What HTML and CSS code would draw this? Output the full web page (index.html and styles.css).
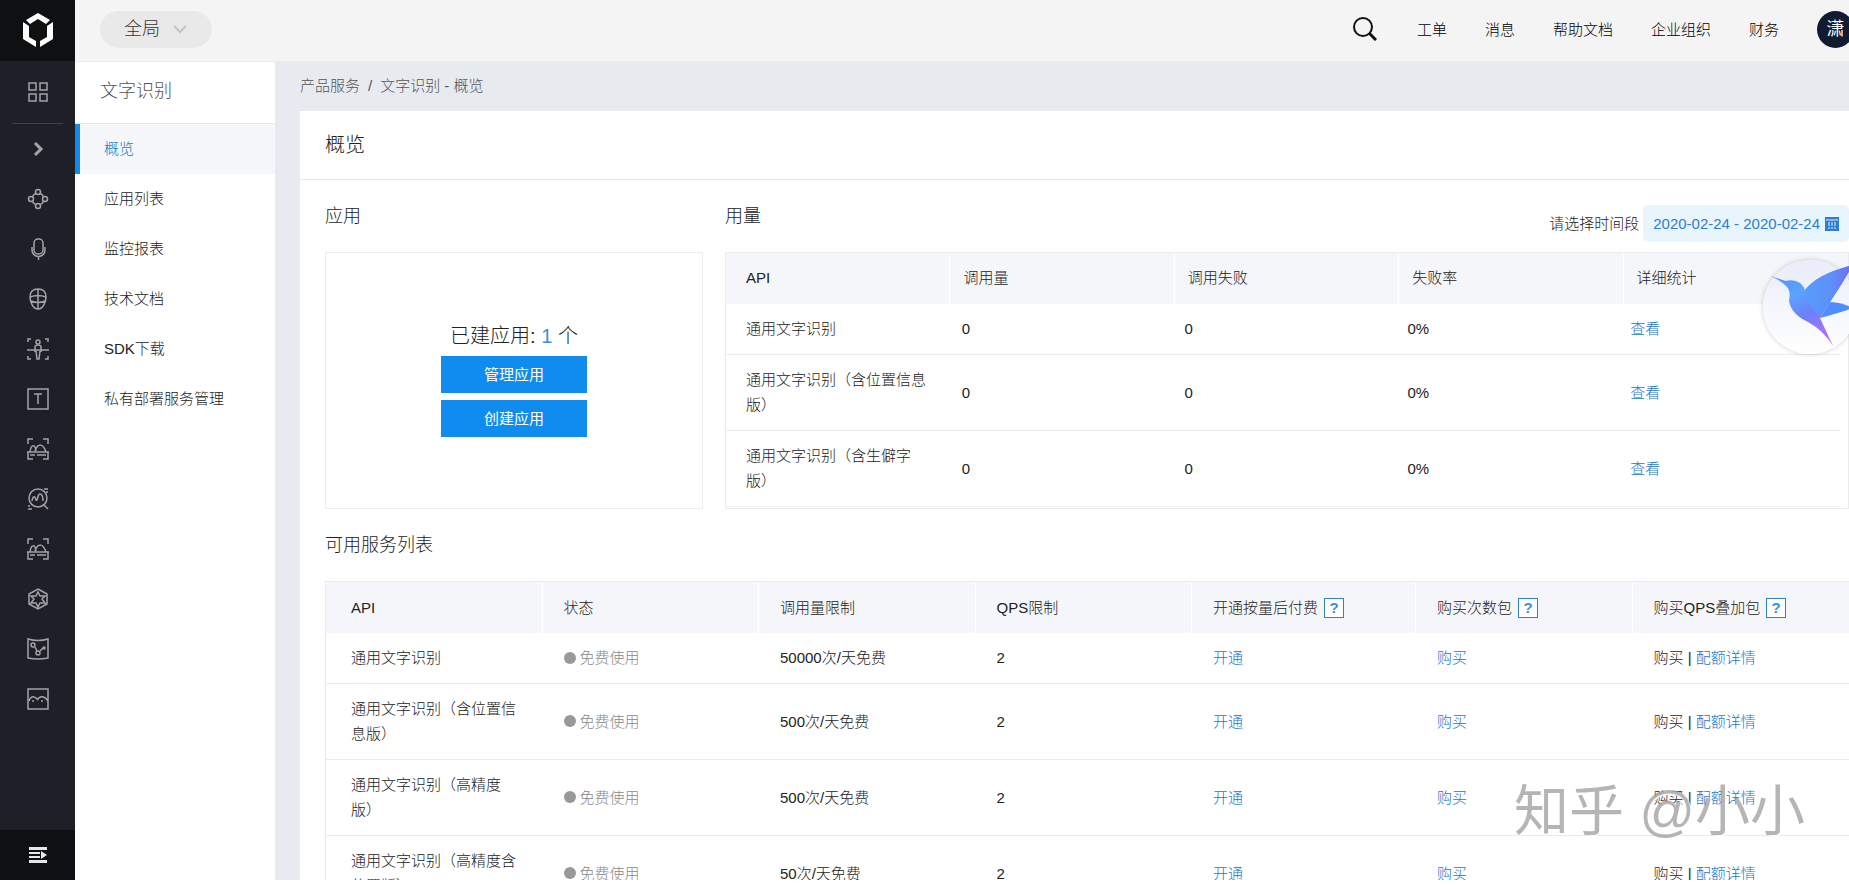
FILE: index.html
```html
<!DOCTYPE html>
<html lang="zh-CN">
<head>
    <meta charset="UTF-8">
    <meta name="viewport" content="width=device-width, initial-scale=1.0">
    <title>文字识别 - 概览</title>
    <link rel="stylesheet" href="styles.css">
</head>
<body>
    <div class="layout">
        <nav class="rail" aria-label="产品导航">
            <a class="rail-logo" href="#" aria-label="首页">
                <svg width="30" height="34" viewBox="0 0 30 34" fill="#fff">
                    <path d="M15 0L27 7L23 11L15 6L7 11L3 7Z"/>
                    <path d="M0 9L6 13V24L13 28V34L0 26Z"/>
                    <path d="M30 9L24 13V24L17 28V34L30 26Z"/>
                </svg>
            </a>
            <a class="rail-item rail-home" href="#" aria-label="产品总览">
                <svg viewBox="0 0 22 22"><path d="M2 2h7v7H2zM13 2h7v7h-7zM2 13h7v7H2zM13 13h7v7h-7z"/></svg>
            </a>
            <div class="rail-list">
                <a class="rail-item" href="#" aria-label="展开">
                    <svg viewBox="0 0 22 22"><path class="thick" d="M8 5l6 6-6 6"/></svg>
                </a>
                <a class="rail-item" href="#" aria-label="应用">
                    <svg viewBox="0 0 22 22"><circle cx="11" cy="11" r="6"/><circle class="node" cx="11" cy="4" r="2.5"/><circle class="node" cx="11" cy="18" r="2.5"/><circle class="node" cx="4" cy="11" r="2.5"/><circle class="node" cx="18" cy="11" r="2.5"/></svg>
                </a>
                <a class="rail-item" href="#" aria-label="语音">
                    <svg viewBox="0 0 22 22"><rect x="7" y="1" width="9" height="15" rx="4"/><path d="M5 9v3a6.500 6.500 0 0 0 13 0V9M11.500 18v4"/></svg>
                </a>
                <a class="rail-item" href="#" aria-label="人脸">
                    <svg viewBox="0 0 22 22"><path d="M11 1c5 0 8 3 8 8s-3 12-8 12-8-7-8-12 3-8 8-8zM11 1v20M3 9q8-3 16 0M4 13q7 3 14 0"/></svg>
                </a>
                <a class="rail-item" href="#" aria-label="人体">
                    <svg viewBox="0 0 22 22"><path d="M1 4V1h3M18 1h3v3M1 18v3h3M18 21h3v-3M0 12h22M9 13l1 8h2l1-8M8 14V9q0-2 3-2t3 2v5"/><circle cx="11" cy="4" r="2"/></svg>
                </a>
                <a class="rail-item" href="#" aria-label="文字">
                    <svg viewBox="0 0 22 22"><path d="M1 1h20v20H1zM7 6h8M11 6v10"/></svg>
                </a>
                <a class="rail-item" href="#" aria-label="图像">
                    <svg viewBox="0 0 22 22"><path d="M1 6V1h5M16 1h5v5M1 14v7h5M16 21h5v-7M0 14h22M3 17h5M10 17h9M3 14C4 6 8 6 9 13M8 13c3-8 8-8 11 1"/></svg>
                </a>
                <a class="rail-item" href="#" aria-label="图像搜索">
                    <svg viewBox="0 0 22 22"><circle cx="11" cy="10" r="9"/><path d="M5 13c1-6 3-5 4-1 2 2 1-6 4-6 2 0 3 3 3 7M17 17l4 4M17 1h4M19 4h2M1 18h2M1 21h4"/></svg>
                </a>
                <a class="rail-item" href="#" aria-label="图像审核">
                    <svg viewBox="0 0 22 22"><path d="M1 6V1h5M16 1h5v5M1 14v7h5M16 21h5v-7M0 14h22M3 17h5M10 17h9M3 14C4 6 8 6 9 13M8 13c3-8 8-8 11 1"/></svg>
                </a>
                <a class="rail-item" href="#" aria-label="增强现实">
                    <svg viewBox="0 0 22 22"><path d="M11 1l9 5v10l-9 5-9-5V6zM11 4l2 4h5l-3 3 3 4h-5l-2 4-2-4H4l3-4-3-3h5z"/></svg>
                </a>
                <a class="rail-item" href="#" aria-label="知识图谱">
                    <svg viewBox="0 0 22 22"><path d="M1 1q10 3 20 0v19q-10 2-20 0zM8 9l2 4M13 13l3-3"/><circle cx="6" cy="7" r="2"/><circle cx="11" cy="15" r="2"/><circle cx="17" cy="10" r="1"/></svg>
                </a>
                <a class="rail-item" href="#" aria-label="视频">
                    <svg viewBox="0 0 22 22"><path d="M1 1h20v20H1zM2 13c2-6 6-5 9-1M10 12c3-5 8-4 11 1M5 13h2M14 13h2"/></svg>
                </a>
            </div>
            <button class="rail-toggle" type="button" aria-label="展开菜单">
                <svg width="18" height="16" viewBox="0 0 18 16" fill="#e3e8e8"><path d="M0 0h18v3H0zM0 5h11v2H0zM0 9h11v2H0zM0 13h18v3H0zM12 4l6 4-6 4z"/></svg>
            </button>
        </nav>

        <div class="page">
            <header class="topbar">
                <button class="region" type="button">全局
                    <svg width="16" height="10" viewBox="0 0 16 10"><path d="M2 2l6 6 6-6" fill="none" stroke="#c4c4c4" stroke-width="2"/></svg>
                </button>
                <div class="topnav">
                    <button class="search" type="button" aria-label="搜索">
                        <svg width="24" height="24" viewBox="0 0 24 24" fill="none" stroke="#111" stroke-width="3"><circle cx="10" cy="10" r="9" stroke-width="2"/><path d="M16 16l7 7"/></svg>
                    </button>
                    <a href="#">工单</a>
                    <a href="#">消息</a>
                    <a href="#">帮助文档</a>
                    <a href="#">企业组织</a>
                    <a href="#">财务</a>
                    <a class="avatar" href="#">潇</a>
                </div>
            </header>

            <div class="body">
                <aside class="sidebar">
                    <h2>文字识别</h2>
                    <a class="active" href="#">概览</a>
                    <a href="#">应用列表</a>
                    <a href="#">监控报表</a>
                    <a href="#">技术文档</a>
                    <a href="#">SDK下载</a>
                    <a href="#">私有部署服务管理</a>
                </aside>

                <main class="main">
                    <div class="breadcrumb"><a href="#">产品服务</a><span class="slash">/</span><span>文字识别 - 概览</span></div>
                    <div class="card">
                        <h1>概览</h1>
                        <div class="panels">
                            <section class="apps">
                                <div class="section-head"><h3>应用</h3></div>
                                <div class="apps-box">
                                    <p>已建应用: <b>1</b> 个</p>
                                    <button type="button">管理应用</button>
                                    <button type="button">创建应用</button>
                                </div>
                            </section>
                            <section class="usage">
                                <div class="section-head">
                                    <h3>用量</h3>
                                    <div class="range">
                                        <label for="range">请选择时间段</label>
                                        <button class="range-btn" id="range" type="button">2020-02-24 - 2020-02-24
                                            <svg width="14" height="14" viewBox="0 0 14 14"><path d="M0 0h14v14H0z" fill="#2d7dd2"/><path d="M1 3h12M3 6h2M6 6h2M9 6h2M3 8h2M6 8h2M9 8h2M3 11h2M6 11h2M9 11h2" stroke="#e8f5fd"/></svg>
                                        </button>
                                    </div>
                                </div>
                                <div class="usage-box">
                                    <table class="usage-table">
                                        <thead>
                                            <tr>
                                                <th>API</th>
                                                <th>调用量</th>
                                                <th>调用失败</th>
                                                <th>失败率</th>
                                                <th>详细统计</th>
                                            </tr>
                                        </thead>
                                    </table>
                                    <div class="usage-scroll">
                                        <table class="usage-table">
                                            <tbody>
                                                <tr>
                                                    <td>通用文字识别</td>
                                                    <td>0</td>
                                                    <td>0</td>
                                                    <td>0%</td>
                                                    <td><a href="#">查看</a></td>
                                                </tr>
                                                <tr>
                                                    <td>通用文字识别（含位置信息版）</td>
                                                    <td>0</td>
                                                    <td>0</td>
                                                    <td>0%</td>
                                                    <td><a href="#">查看</a></td>
                                                </tr>
                                                <tr>
                                                    <td>通用文字识别（含生僻字版）</td>
                                                    <td>0</td>
                                                    <td>0</td>
                                                    <td>0%</td>
                                                    <td><a href="#">查看</a></td>
                                                </tr>
                                            </tbody>
                                        </table>
                                    </div>
                                </div>
                            </section>
                        </div>

                        <section class="services">
                            <h3>可用服务列表</h3>
                            <table class="service-table">
                                <thead>
                                    <tr>
                                        <th>API</th>
                                        <th>状态</th>
                                        <th>调用量限制</th>
                                        <th>QPS限制</th>
                                        <th class="wide">开通按量后付费<button class="help" type="button">?</button></th>
                                        <th>购买次数包<button class="help" type="button">?</button></th>
                                        <th>购买QPS叠加包<button class="help" type="button">?</button></th>
                                    </tr>
                                </thead>
                                <tbody>
                                    <tr>
                                        <td>通用文字识别</td>
                                        <td><span class="status">免费使用</span></td>
                                        <td>50000次/天免费</td>
                                        <td>2</td>
                                        <td><a href="#">开通</a></td>
                                        <td><a href="#">购买</a></td>
                                        <td>购买 | <a href="#">配额详情</a></td>
                                    </tr>
                                    <tr>
                                        <td>通用文字识别（含位置信息版）</td>
                                        <td><span class="status">免费使用</span></td>
                                        <td>500次/天免费</td>
                                        <td>2</td>
                                        <td><a href="#">开通</a></td>
                                        <td><a href="#">购买</a></td>
                                        <td>购买 | <a href="#">配额详情</a></td>
                                    </tr>
                                    <tr>
                                        <td>通用文字识别（高精度版）</td>
                                        <td><span class="status">免费使用</span></td>
                                        <td>500次/天免费</td>
                                        <td>2</td>
                                        <td><a href="#">开通</a></td>
                                        <td><a href="#">购买</a></td>
                                        <td>购买 | <a href="#">配额详情</a></td>
                                    </tr>
                                    <tr>
                                        <td>通用文字识别（高精度含位置版）</td>
                                        <td><span class="status">免费使用</span></td>
                                        <td>50次/天免费</td>
                                        <td>2</td>
                                        <td><a href="#">开通</a></td>
                                        <td><a href="#">购买</a></td>
                                        <td>购买 | <a href="#">配额详情</a></td>
                                    </tr>
                                </tbody>
                            </table>
                        </section>
                    </div>
                </main>
            </div>
        </div>
    </div>

    <a class="bird" href="#" aria-label="助手">
        <svg width="94" height="94" viewBox="0 0 94 94">
            <defs>
                <linearGradient id="wing" x1="0" y1="0" x2="1" y2="0">
                    <stop offset="0" stop-color="#559df9"/>
                    <stop offset="0.6" stop-color="#5f8dfb"/>
                    <stop offset="1" stop-color="#7b63e8"/>
                </linearGradient>
                <linearGradient id="torso" x1="0" y1="0" x2="0.6" y2="1">
                    <stop offset="0" stop-color="#4a90f0"/>
                    <stop offset="0.4" stop-color="#5ba3ff"/>
                    <stop offset="0.65" stop-color="#6d7ffb"/>
                    <stop offset="1" stop-color="#c06bf2"/>
                </linearGradient>
            </defs>
            <path d="M67 42Q78 42 90 48Q76 53 57 58Z" fill="#4d8dff"/>
            <path d="M7 16L23 21Q31 19 37 23Q41 26 42 30Q54 14 90 5L78 25L67 42L57 58L70 86Q60 70 45 62Q28 54 26 41Q28 31 24 27Q19 21 7 16Z" fill="url(#torso)"/>
            <path d="M42 30Q54 14 90 5L78 25L67 42L57 56Q44 46 42 30Z" fill="url(#wing)"/>
        </svg>
    </a>
    <div class="watermark">知乎 @小小</div>
</body>
</html>
```
FILE: styles.css
```css
* {
    box-sizing: border-box;
}

body {
    margin: 0;
    overflow: hidden;
    font-family: "Liberation Sans", "Noto Sans CJK SC", sans-serif;
    font-size: 15px;
    font-weight: 300;
    line-height: 25px;
    color: #222;
    background-color: #fff;
}

h1, h2, h3, p {
    margin: 0;
    font-weight: 300;
}

a {
    color: #1677c8;
    text-decoration: none;
}

button {
    font: inherit;
    border: none;
    padding: 0;
    cursor: pointer;
}

.layout {
    display: flex;
    height: calc(100vh - 5px);
    background-color: #e7eaef;
}

/* dark icon rail */
.rail {
    flex: 0 0 75px;
    display: flex;
    flex-direction: column;
    background-color: #1f1f28;
}

.rail-logo {
    flex: 0 0 61px;
    display: flex;
    align-items: center;
    justify-content: center;
    padding-bottom: 2px;
    background-color: #0f1012;
}

.rail-item {
    flex: 0 0 50px;
    display: flex;
    align-items: center;
    justify-content: center;
}

.rail-home {
    flex-basis: 62px;
}

.rail-item svg {
    width: 22px;
    height: 22px;
    fill: none;
    stroke: #a3a3a8;
    stroke-width: 1.5;
}

.rail-item .thick {
    stroke-width: 3;
}

.rail-item .node {
    fill: #1f1f28;
}

.rail-list {
    flex: 1;
    display: flex;
    flex-direction: column;
    overflow: hidden;
}

.rail-list::before {
    content: "";
    flex: 0 0 1px;
    margin: 0 12px;
    background-color: #41414b;
}

.rail-toggle {
    flex: 0 0 50px;
    display: flex;
    align-items: center;
    justify-content: center;
    background-color: #0f1012;
}

.page {
    flex: 1;
    min-width: 0;
    display: flex;
    flex-direction: column;
}

/* top bar */
.topbar {
    flex: 0 0 61px;
    display: flex;
    align-items: center;
    justify-content: space-between;
    padding: 0 0 3px 25px;
    background-color: #f4f4f4;
}

.region {
    display: flex;
    align-items: center;
    gap: 12px;
    height: 37px;
    padding: 0 24px;
    border-radius: 20px;
    font-size: 18px;
    color: #333;
    background-color: #e9e9e9;
}

.topnav {
    display: flex;
    align-items: center;
    gap: 38px;
    margin-right: -5px;
}

.topnav a {
    color: #000;
}

.search {
    display: flex;
    margin-right: 2px;
    background: none;
}

.topnav .avatar {
    width: 37px;
    height: 37px;
    border-radius: 50%;
    line-height: 37px;
    text-align: center;
    font-size: 18px;
    font-weight: 400;
    color: #fff;
    background-color: #101a30;
}

.body {
    flex: 1;
    min-height: 0;
    display: flex;
}

/* second level menu */
.sidebar {
    flex: 0 0 200px;
    border-top: 1px solid #ebedf0;
    background-color: #fff;
}

.sidebar h2 {
    height: 62px;
    padding-left: 25px;
    border-bottom: 1px solid #e6e8ec;
    font-size: 18px;
    line-height: 58px;
    color: #555;
}

.sidebar a {
    display: block;
    padding-left: 29px;
    line-height: 50px;
    color: #222;
}

.sidebar .active {
    padding-left: 24px;
    border-left: 5px solid #108cee;
    color: #1677c8;
    background-color: #f5f7fa;
}

.main {
    flex: 1;
    min-width: 0;
    padding: 12px 0 0 25px;
    overflow: hidden;
}

.breadcrumb {
    margin-bottom: 13px;
    color: #555;
}

.breadcrumb a {
    color: #555;
}

.slash {
    margin: 0 8px;
}

.card {
    padding-left: 25px;
    background-color: #fff;
}

.card h1 {
    height: 69px;
    margin-left: -25px;
    padding-left: 25px;
    border-bottom: 1px solid #e8e9eb;
    font-size: 20px;
    line-height: 68px;
}

.card h3 {
    font-size: 18px;
    line-height: 26px;
}

.panels {
    display: flex;
    gap: 22px;
}

.section-head {
    display: flex;
    justify-content: space-between;
    align-items: flex-start;
    height: 72px;
    padding-top: 23px;
}

.apps {
    flex: 0 0 378px;
}

.apps-box {
    display: flex;
    flex-direction: column;
    align-items: center;
    justify-content: center;
    gap: 7px;
    height: 257px;
    border: 1px solid #ececee;
}

.apps-box p {
    font-size: 20px;
}

.apps-box b {
    font-weight: 300;
    color: #3a8ee0;
}

.apps-box button {
    width: 146px;
    height: 37px;
    font-weight: 400;
    color: #fff;
    background-color: #108cee;
}

.usage {
    flex: 1;
    min-width: 0;
}

.range {
    display: flex;
    align-items: center;
    gap: 4px;
    margin-top: 2px;
}

.range-btn {
    display: flex;
    align-items: center;
    gap: 5px;
    height: 37px;
    padding: 0 10px;
    border-radius: 5px;
    color: #2d7dd2;
    background-color: #e8f5fd;
}

.usage-box {
    height: 257px;
    border: 1px solid #ececee;
}

.usage-scroll {
    height: 204px;
    padding-right: 8px;
    overflow: hidden;
}

/* tables */
table {
    width: 100%;
    table-layout: fixed;
    border-collapse: separate;
    border-spacing: 0;
}

th {
    font-weight: 300;
    text-align: left;
    background-color: #f5f6fa;
    border-right: 1px solid #fff;
}

th:last-child {
    border-right: none;
}

td {
    border-bottom: 1px solid #ebebed;
}

.usage-table th, .usage-table td {
    padding: 12px 13px;
}

.usage-table th {
    padding-bottom: 14px;
}

.usage-table td {
    padding-bottom: 13px;
}

.usage-table th:first-child, .usage-table td:first-child {
    padding-left: 20px;
    padding-right: 20px;
}

.services h3 {
    padding: 23px 0;
    line-height: 26px;
}

.service-table {
    border-top: 1px solid #ebebed;
    border-left: 1px solid #ebebed;
}

.service-table th, .service-table td {
    padding: 13px 21px;
}

.service-table td {
    padding: 12px 21px 13px;
}

.service-table th:first-child, .service-table td:first-child {
    padding-left: 25px;
}

.service-table th:last-child, .service-table td:last-child {
    padding-right: 0;
}

.wide {
    width: 224px;
}

.help {
    width: 20px;
    height: 20px;
    margin-left: 6px;
    border: 1px solid #2b85b8;
    line-height: 18px;
    font-weight: 700;
    color: #3a8ee0;
    background-color: #fff;
}

.status {
    display: flex;
    align-items: center;
    gap: 4px;
    color: #888;
}

.status::before {
    content: "";
    width: 12px;
    height: 12px;
    border-radius: 50%;
    background-color: #999;
}

/* floating assistant */
.bird {
    position: fixed;
    top: 260px;
    right: -8px;
    width: 94px;
    height: 94px;
    border-radius: 50%;
    background: linear-gradient(#e9edfa, #fff);
    box-shadow: 0 0 5px rgba(0, 0, 0, 0.2);
}

.watermark {
    position: fixed;
    right: 44px;
    bottom: 42px;
    font-size: 55px;
    font-weight: 400;
    line-height: 64px;
    color: rgba(120, 120, 120, 0.55);
    text-shadow: 1px 1px 0 #fff;
    pointer-events: none;
}
```
